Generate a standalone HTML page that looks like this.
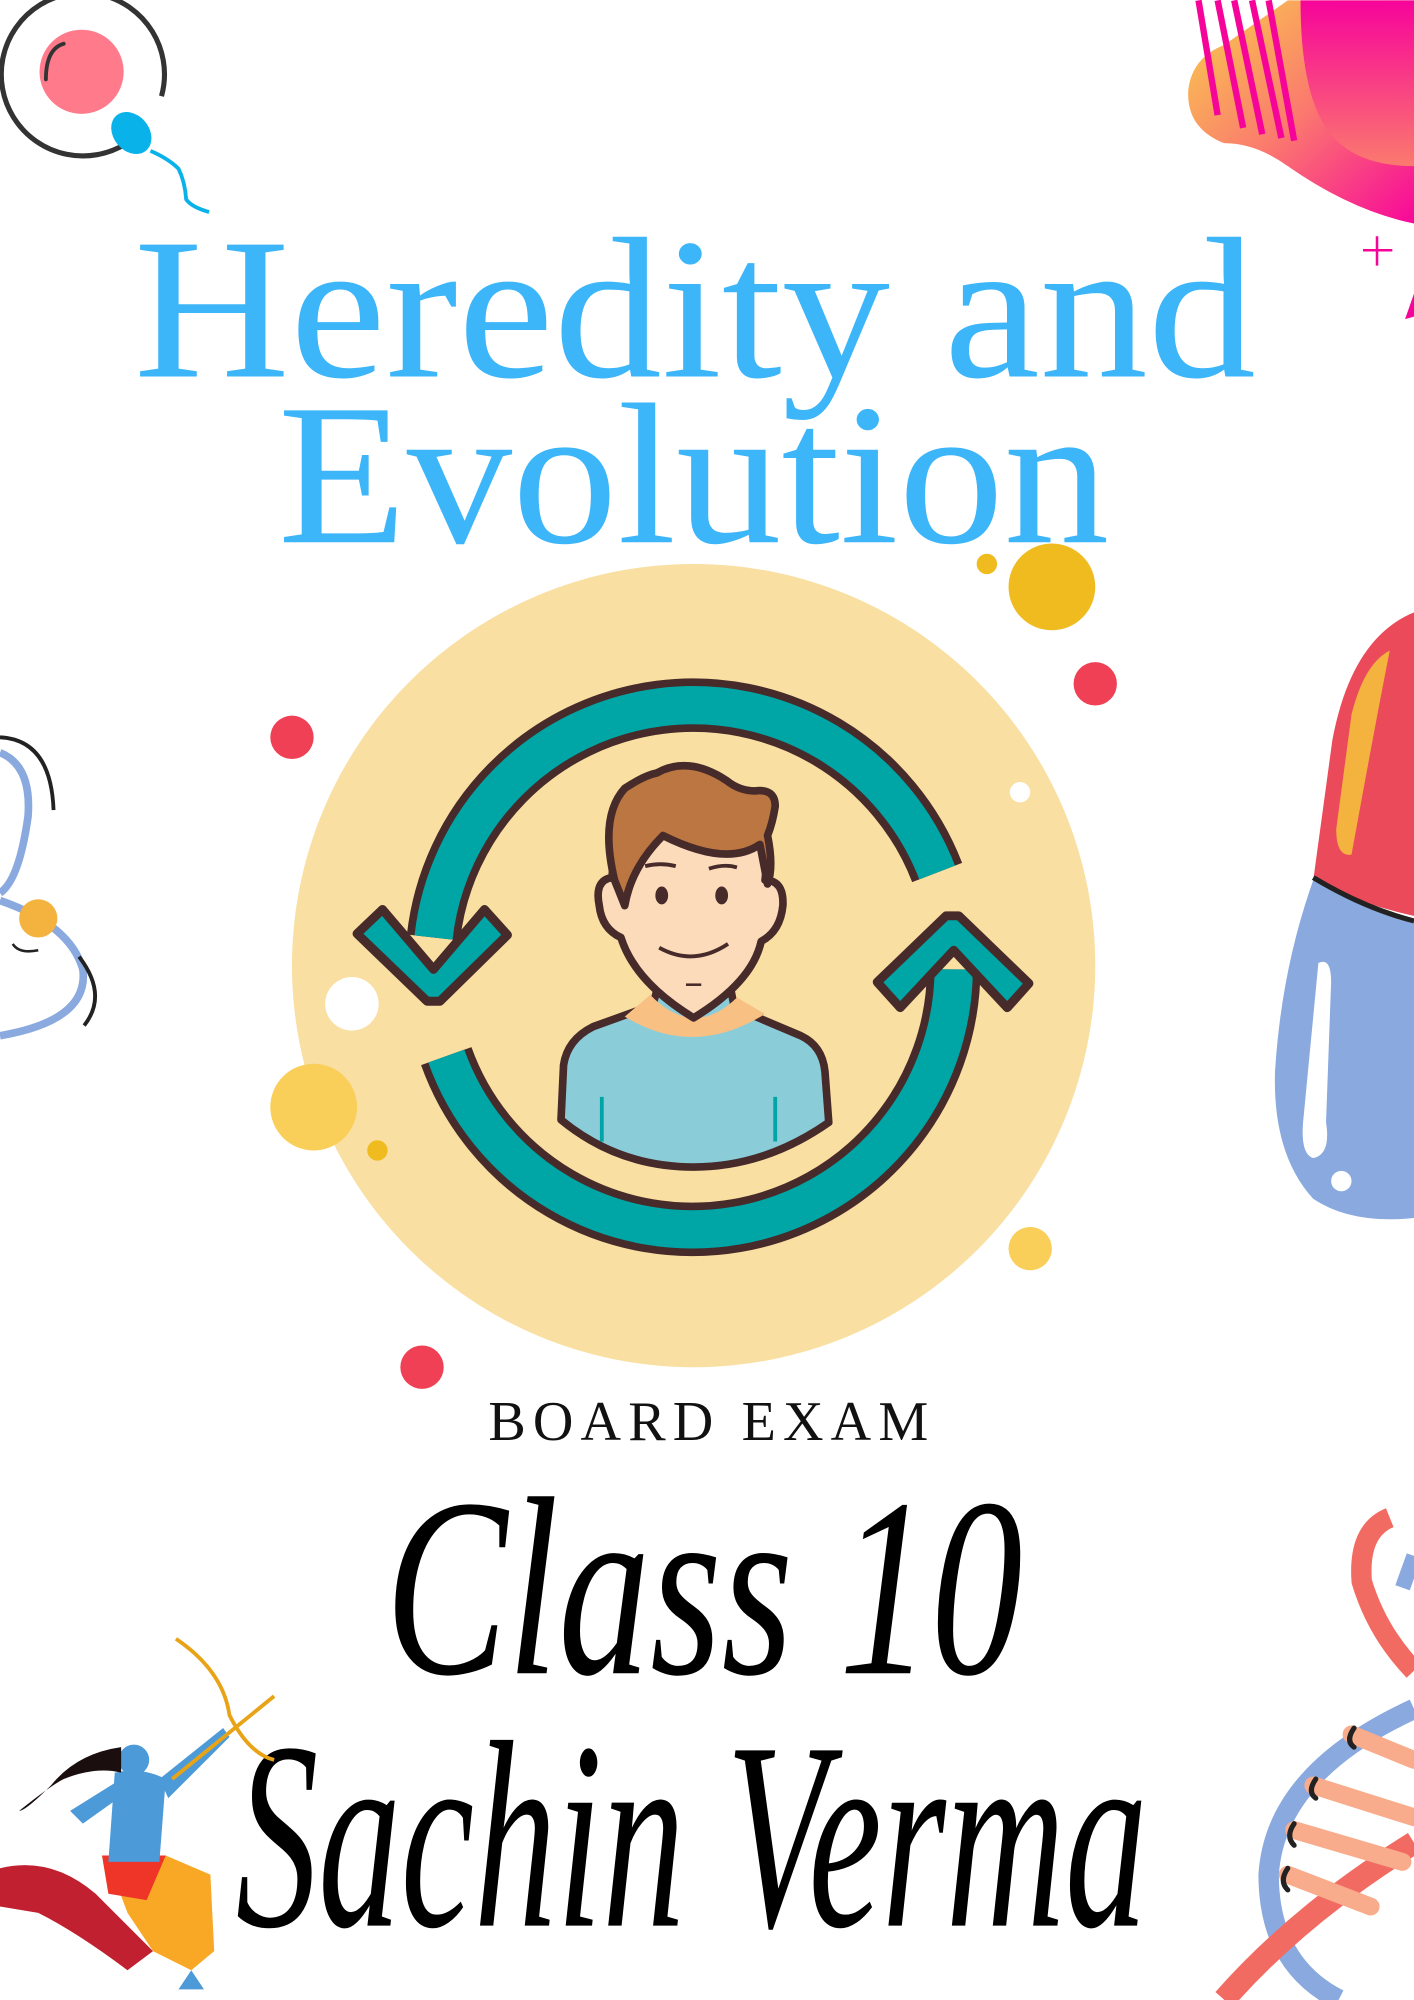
<!DOCTYPE html>
<html><head><meta charset="utf-8"><style>
html,body{margin:0;padding:0;background:#fff;width:1414px;height:2000px;overflow:hidden}
svg{display:block}
</style></head><body>
<svg width="1414" height="2000" viewBox="0 0 1109 1568" xmlns="http://www.w3.org/2000/svg">
<defs>
<linearGradient id="pg" x1="0" y1="0" x2="1" y2="1"><stop offset="0" stop-color="#f8d04a"/><stop offset="0.5" stop-color="#fb7a6e"/><stop offset="1" stop-color="#f7079a"/></linearGradient>
<linearGradient id="pg2" x1="0" y1="0" x2="0" y2="1"><stop offset="0" stop-color="#f6049a"/><stop offset="1" stop-color="#fb7a6e"/></linearGradient>
</defs>
<!-- top-left sperm/egg -->
<circle cx="65" cy="58" r="64" fill="none" stroke="#333" stroke-width="4" stroke-dasharray="330 40" transform="rotate(80 65 58)"/>
<circle cx="64" cy="56" r="33" fill="#ff7b8c"/>
<path d="M36 62 Q36 38 50 34" fill="none" stroke="#333" stroke-width="3" stroke-linecap="round"/>
<ellipse cx="103" cy="104" rx="14" ry="18" transform="rotate(-40 103 104)" fill="#0ab2ea"/>
<path d="M118 118 Q132 124 140 132 Q145 142 146 156 Q150 162 164 166" fill="none" stroke="#0ab2ea" stroke-width="3"/>
<!-- top-right gradient blob -->
<path d="M1109 0 L1109 175 Q1060 165 1010 130 Q985 112 960 112 Q930 100 932 70 Q935 45 960 35 L1010 0 Z" fill="url(#pg)"/>
<path d="M1020 0 L1109 0 L1109 130 Q1060 130 1040 100 Q1020 70 1020 0 Z" fill="url(#pg2)"/>
<g stroke="#f6049a" stroke-width="5"><line x1="940" y1="0" x2="955" y2="90"/><line x1="955" y1="0" x2="975" y2="100"/><line x1="968" y1="0" x2="990" y2="105"/><line x1="982" y1="0" x2="1005" y2="108"/><line x1="995" y1="0" x2="1015" y2="110"/></g>
<path d="M1080 185 V208 M1069 196 H1092" stroke="#f6049a" stroke-width="2"/>
<path d="M1109 230 L1102 250 L1109 248 Z" fill="#f6049a"/>
<!-- right pill -->
<path d="M1109 480 Q1060 500 1045 580 L1030 690 Q1070 710 1109 718 Z" fill="#ea4a5a"/>
<path d="M1060 560 Q1070 520 1090 510 Q1080 560 1060 670 Q1048 672 1048 650 Z" fill="#f4b33f"/>
<path d="M1030 690 Q1070 715 1109 720 L1109 955 Q1060 960 1030 940 Q998 905 1000 840 Q1005 760 1030 690 Z" fill="#89a9df"/>
<path d="M1030 688 Q1070 712 1109 722" fill="none" stroke="#222" stroke-width="4"/>
<path d="M1034 755 Q1044 750 1044 770 L1040 880 Q1044 905 1030 908 Q1020 905 1022 880 Z" fill="#fff"/>
<circle cx="1052" cy="926" r="8" fill="#fff"/>
<!-- left swirl -->
<path d="M0 590 Q25 600 22 640 Q15 690 0 700" fill="none" stroke="#89a9df" stroke-width="6"/>
<path d="M0 706 Q55 725 65 760 Q70 800 0 812" fill="none" stroke="#89a9df" stroke-width="6"/>
<path d="M0 578 Q40 580 42 635" fill="none" stroke="#222" stroke-width="3"/>
<path d="M62 750 Q85 780 66 804" fill="none" stroke="#222" stroke-width="3"/>
<circle cx="30" cy="720" r="15" fill="#f4b33f"/>
<path d="M10 740 Q15 748 30 745" fill="none" stroke="#222" stroke-width="2"/>
<!-- big circle -->
<circle cx="544" cy="757" r="315" fill="#f9dfa1"/>
<!-- dots -->
<circle cx="825" cy="460" r="34" fill="#f0bb1e"/>
<circle cx="774" cy="442" r="8" fill="#f0bb1e"/>
<circle cx="859" cy="536" r="17" fill="#ef4055"/>
<circle cx="800" cy="621" r="8" fill="#fff"/>
<circle cx="229" cy="578" r="17" fill="#ef4055"/>
<circle cx="276" cy="787" r="21" fill="#fff"/>
<circle cx="246" cy="868" r="34" fill="#f9cf59"/>
<circle cx="296" cy="902" r="8" fill="#f0bb1e"/>
<circle cx="808" cy="979" r="17" fill="#f9cf59"/>
<circle cx="331" cy="1072" r="17" fill="#ef4055"/>
<!-- person -->
<g stroke="#472a2a" stroke-width="6" stroke-linejoin="round">
<path d="M440 878 L442 835 Q445 815 465 805 L512 788 L517 770 L572 770 L576 790 L628 812 Q645 820 647 840 L650 880 Q600 915 544 915 Q485 915 440 878 Z" fill="#8bccd9"/>
<path d="M510 780 Q544 815 578 782 L600 795 Q544 830 490 797 Z" fill="#f8c083" stroke="none"/>
<path d="M487 735 Q472 728 470 710 Q466 690 480 688 Q483 640 500 625 Q544 600 590 625 Q605 650 600 690 Q615 690 614 710 Q612 730 597 738 Q590 770 544 798 Q498 770 487 735 Z" fill="#fcdbbb"/>
<path d="M482 690 Q470 640 490 618 Q505 608 515 606 Q540 592 570 612 Q580 620 592 620 Q608 618 608 632 Q606 645 602 655 Q607 680 602 693 L596 662 Q570 680 520 655 Q495 680 490 710 Z" fill="#bb7641"/>
</g>
<g fill="#472a2a"><ellipse cx="519" cy="702" rx="5" ry="7"/><ellipse cx="566" cy="702" rx="5" ry="7"/></g>
<path d="M517 743 Q544 758 571 740" fill="none" stroke="#472a2a" stroke-width="3"/>
<path d="M506 679 Q518 676 530 679 M556 681 Q568 677 578 680" fill="none" stroke="#472a2a" stroke-width="3"/>
<path d="M538 772 H550" stroke="#472a2a" stroke-width="2"/>
<path d="M472 860 V895 M608 860 V895" stroke="#00a4a6" stroke-width="3"/>
<!-- arrows -->
<g fill="none" stroke-linecap="butt">
<path d="M340 735 A205 205 0 0 1 735 684" stroke="#472a2a" stroke-width="42"/>
<path d="M340 735 A205 205 0 0 1 735 684" stroke="#00a5a6" stroke-width="30"/>
<path d="M350 828 A205 205 0 0 0 748 760" stroke="#472a2a" stroke-width="42"/>
<path d="M350 828 A205 205 0 0 0 748 760" stroke="#00a5a6" stroke-width="30"/>
</g>
<g fill="#00a5a6" stroke="#472a2a" stroke-width="7" stroke-linejoin="round">
<polygon points="280,732 300,713 340,760 380,713 398,733 345,785 335,785"/>
<polygon points="688,770 706,790 748,745 790,790 807,771 752,718 742,718"/>
</g>
<!-- title -->
<g font-family="'Liberation Serif',serif" fill="#3db5f9">
<text x="105" y="295" font-size="158" textLength="880" lengthAdjust="spacingAndGlyphs">Heredity and</text>
<text x="218" y="425" font-size="158" textLength="652" lengthAdjust="spacingAndGlyphs">Evolution</text>
</g>
<text x="383" y="1129" font-family="'Liberation Serif',serif" font-size="44" fill="#111" textLength="345" lengthAdjust="spacing">BOARD EXAM</text>
<g font-family="'Liberation Serif',serif" font-style="italic" fill="#000">
<text x="302" y="1312" font-size="200" textLength="500" lengthAdjust="spacingAndGlyphs">Class 10</text>
<text x="185" y="1510" font-size="210" textLength="715" lengthAdjust="spacingAndGlyphs">Sachin Verma</text>
</g>
<!-- archer (approx) -->
<g>
<path d="M0 1465 Q40 1455 75 1485 Q100 1510 120 1530 L100 1545 Q60 1515 30 1500 L0 1495 Z" fill="#c0202f"/>
<path d="M85 1460 L130 1455 L165 1470 L168 1530 L150 1545 L120 1530 L100 1500 Z" fill="#f9a825"/>
<path d="M80 1455 L130 1455 L115 1490 L85 1485 Z" fill="#ee3528"/>
<path d="M90 1390 Q110 1385 130 1395 L125 1460 L85 1460 Z" fill="#4d9ad8"/>
<path d="M125 1395 L175 1355 L180 1362 L132 1410 Z" fill="#4d9ad8"/>
<path d="M55 1420 L95 1395 L100 1405 L65 1430 Z" fill="#4d9ad8"/>
<circle cx="105" cy="1380" r="12" fill="#4d9ad8"/>
<path d="M95 1370 Q60 1375 40 1400 Q20 1420 15 1420 Q40 1400 50 1395 Q75 1385 95 1390 Z" fill="#1a0e0e"/>
<path d="M138 1285 Q175 1310 180 1345 Q195 1375 215 1380 M135 1395 L215 1330" fill="none" stroke="#e8a317" stroke-width="3"/>
<path d="M140 1560 L160 1560 L150 1545 Z" fill="#4d9ad8"/>
</g>
<!-- DNA -->
<g fill="none">
<path d="M1109 1340 Q1000 1390 995 1470 Q995 1540 1050 1568" stroke="#89a9df" stroke-width="16"/>
<path d="M1109 1445 Q1020 1500 960 1568" stroke="#f26b62" stroke-width="18"/>
<path d="M1090 1190 Q1065 1200 1068 1240 Q1080 1280 1109 1310" stroke="#f26b62" stroke-width="16"/>
<path d="M1109 1220 L1100 1245" stroke="#89a9df" stroke-width="12"/>
<g stroke="#f8ac8c" stroke-width="14" stroke-linecap="round">
<line x1="1060" y1="1360" x2="1109" y2="1380"/><line x1="1030" y1="1400" x2="1109" y2="1425"/><line x1="1015" y1="1435" x2="1100" y2="1460"/><line x1="1010" y1="1470" x2="1075" y2="1495"/>
</g>
<g stroke="#222" stroke-width="4" stroke-linecap="round">
<path d="M1062 1355 Q1055 1365 1062 1370"/><path d="M1032 1395 Q1025 1405 1032 1410"/><path d="M1015 1430 Q1008 1440 1015 1447"/><path d="M1010 1465 Q1003 1475 1010 1482"/>
</g>
</g>
</svg>
</body></html>
